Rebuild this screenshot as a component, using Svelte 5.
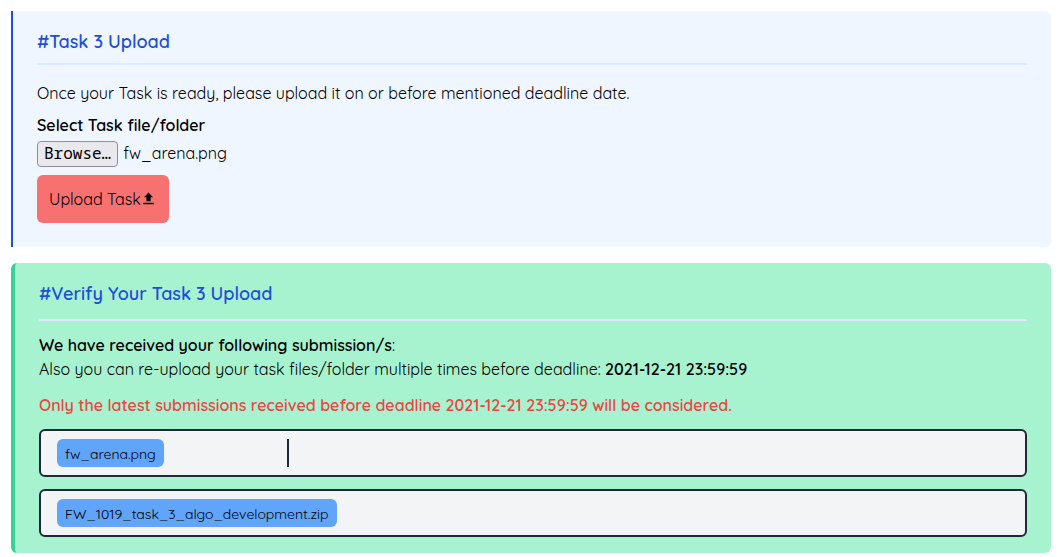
<script>
  const deadline = '2021-12-21 23:59:59';
  let selected = $state('fw_arena.png');
  const submissions = [
    { name: 'fw_arena.png', divider: true },
    { name: 'FW_1019_task_3_algo_development.zip', divider: false }
  ];

  function pick(event) {
    const file = event.currentTarget.files[0];
    if (file) selected = file.name;
  }
</script>

<main>
  <section class="card upload">
    <h2>#Task 3 Upload</h2>
    <form onsubmit={(e) => e.preventDefault()}>
      <p>Once your Task is ready, please upload it on or before mentioned deadline date.</p>
      <label class="caption" for="task-file">Select Task file/folder</label>
      <div class="picker">
        <input id="task-file" type="file" onchange={pick} />
        <label class="browse" for="task-file">Browse…</label>
        <span>{selected}</span>
      </div>
      <button type="submit">
        Upload Task
        <svg viewBox="0 0 16 16" width="16" height="16" aria-hidden="true">
          <path d="M7.5 1.6 L12 6.2 H9.6 V10.2 H5.4 V6.2 H3 Z M2.2 11.8 H12.8 V13.2 H2.2 Z" fill="currentColor" />
        </svg>
      </button>
    </form>
  </section>

  <section class="card verify">
    <h2>#Verify Your Task 3 Upload</h2>
    <p><strong>We have received your following submission/s</strong>:</p>
    <p>Also you can re-upload your task files/folder multiple times before deadline: <strong>{deadline}</strong></p>
    <p class="notice">Only the latest submissions received before deadline {deadline} will be considered.</p>
    <ul>
      {#each submissions as item}
        <li>
          <div class="cell" class:divided={item.divider}><span class="chip">{item.name}</span></div>
        </li>
      {/each}
    </ul>
  </section>
</main>

<style>
  :global(body) {
    margin: 0;
    background: #fff;
  }
  main {
    display: flex;
    flex-direction: column;
    gap: 16px;
    padding: 11px 7px 4px 11px;
    font: 400 16px/24px Quicksand, Lato, sans-serif;
    color: #000;
  }
  .card {
    padding: 16px 24px;
  }
  .upload {
    padding-bottom: 24px;
    background: #eff6ff;
    border-left: 2px solid #1d4ed8;
    border-radius: 0 6px 6px 0;
  }
  .verify {
    background: #a7f3d0;
    border-left: 4px solid #34d399;
    border-radius: 6px;
  }
  h2 {
    margin: 0 0 16px;
    padding-bottom: 6px;
    border-bottom: 2px solid #dbeafe;
    font-size: 18px;
    line-height: 30px;
    font-weight: 600;
    color: #1d4ed8;
  }
  .verify h2 {
    margin-bottom: 12px;
    padding-bottom: 10px;
    border-color: #e0e7ff;
  }
  p {
    margin: 0;
  }
  strong,
  .caption {
    font-weight: 600;
  }
  form {
    display: flex;
    flex-direction: column;
    align-items: flex-start;
  }
  .caption {
    margin-top: 8px;
  }
  .picker {
    position: relative;
    display: flex;
    align-items: flex-start;
    gap: 5px;
    margin: 4px 0 8px;
  }
  .picker input {
    position: absolute;
    width: 1px;
    height: 1px;
    opacity: 0;
  }
  .browse {
    padding: 0 6px 2px;
    border: 1px solid #8f8f9d;
    border-radius: 4px;
    background: #e9e9ed;
    font-family: "Noto Sans Mono", "DejaVu Sans Mono", monospace;
    line-height: 22px;
    cursor: pointer;
  }
  button {
    display: flex;
    align-items: center;
    padding: 12px;
    border: 0;
    border-radius: 6px;
    background: #f87171;
    color: #000;
    font: inherit;
    cursor: pointer;
  }
  .notice {
    margin: 12px 0;
    font-weight: 600;
    color: #ef4444;
  }
  ul {
    display: flex;
    flex-direction: column;
    gap: 12px;
    margin: 0;
    padding: 0;
    list-style: none;
  }
  li {
    display: flex;
    padding: 8px 16px;
    border: 2px solid #1f2937;
    border-radius: 6px;
    background: #f3f4f6;
  }
  .cell {
    display: flex;
  }
  .divided {
    width: 230px;
    border-right: 2px solid #1f2937;
  }
  .chip {
    padding: 5px 8px 3px;
    border-radius: 6px;
    background: #60a5fa;
    font-size: 14px;
    line-height: 20px;
    color: #000;
  }
</style>
